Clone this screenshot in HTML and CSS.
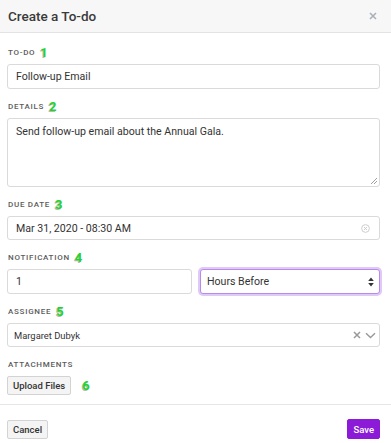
FILE: index.html
```html
<!DOCTYPE html>
<html lang="en">
<head>
    <meta charset="UTF-8">
    <meta name="viewport" content="width=device-width, initial-scale=1.0">
    <title>Create a To-do</title>
    <link rel="stylesheet" href="styles.css">
</head>
<body>
    <div class="modal">
        <div class="modal-header">
            <h1>Create a To-do</h1>
            <svg class="close" width="8" height="8" viewBox="0 0 8 8"><path d="M1 1L7 7M7 1L1 7" stroke="#aab0bb" stroke-width="1.6"/></svg>
        </div>
        <div class="modal-body">
            <div class="field">
                <label>TO-DO <span class="num">1</span></label>
                <div class="input">Follow-up Email</div>
            </div>
            <div class="field">
                <label>DETAILS <span class="num">2</span></label>
                <div class="input textarea">Send follow-up email about the Annual Gala.
                    <svg class="grip" width="7" height="7" viewBox="0 0 7 7"><path d="M1 7L7 1M4 7L7 4" stroke="#888" stroke-width="0.8"/></svg>
                </div>
            </div>
            <div class="field">
                <label>DUE DATE <span class="num">3</span></label>
                <div class="input date">Mar 31, 2020 - 08:30 AM
                    <svg class="clear" width="9" height="9" viewBox="0 0 10 10"><circle cx="5" cy="5" r="4.3" fill="none" stroke="#c4c4c4" stroke-width="0.9"/><path d="M3.3 3.3L6.7 6.7M6.7 3.3L3.3 6.7" stroke="#c4c4c4" stroke-width="0.9"/></svg>
                </div>
            </div>
            <div class="field">
                <label>NOTIFICATION <span class="num">4</span></label>
                <div class="row">
                    <div class="input">1</div>
                    <div class="input select">Hours Before
                        <svg class="arrows" width="6" height="10" viewBox="0 0 6 10"><path d="M3 0.5L5.8 4H0.2Z M3 9.5L5.8 6H0.2Z" fill="#333"/></svg>
                    </div>
                </div>
            </div>
            <div class="field">
                <label>ASSIGNEE <span class="num">5</span></label>
                <div class="input picker">Margaret Dubyk
                    <span class="picker-icons">
                        <svg width="8" height="8" viewBox="0 0 8 8"><path d="M1 1L7 7M7 1L1 7" stroke="#999" stroke-width="1.5"/></svg>
                        <svg width="11" height="7" viewBox="0 0 11 7"><path d="M1 1.2L5.5 5.6L10 1.2" fill="none" stroke="#999" stroke-width="1.4"/></svg>
                    </span>
                </div>
            </div>
            <div class="field">
                <label>ATTACHMENTS</label>
                <div class="upload">
                    <button class="btn">Upload Files</button>
                    <span class="num">6</span>
                </div>
            </div>
        </div>
        <div class="modal-footer">
            <button class="btn">Cancel</button>
            <button class="btn btn-primary">Save</button>
        </div>
    </div>
</body>
</html>
```

FILE: styles.css
```css
* {
    margin: 0;
    padding: 0;
    box-sizing: border-box;
}
body {
    font-family: Roboto, "Liberation Sans", Arial, sans-serif;
    color: #333;
    background: #fff;
}
.modal {
    width: 391px;
    height: 443px;
}
.modal-header {
    height: 33px;
    padding: 0 9px 0 8px;
    display: flex;
    align-items: center;
    justify-content: space-between;
    background: #f7f7f7;
    border-bottom: 1px solid #e3e3e3;
}
.modal-header h1 {
    font-size: 13.5px;
    font-weight: 500;
    color: #3a3a3a;
}
.close {
    margin-right: 5px;
}
.modal-body {
    padding: 13px 11px 9px 7px;
    border-bottom: 1px solid #e6e6e6;
}
.field + .field {
    margin-top: 11px;
}
label {
    display: flex;
    align-items: center;
    height: 12px;
    margin: 0 0 6px 1px;
    font-size: 8px;
    font-weight: 500;
    letter-spacing: 0.09em;
    color: #5c5c5c;
}
.num {
    margin-left: 5px;
    font-size: 13px;
    font-weight: 700;
    color: #22d32a;
    text-shadow: -1px 1px 0 #b8b8b8;
    letter-spacing: 0;
}
.input {
    position: relative;
    height: 25px;
    padding: 0 8px;
    display: flex;
    align-items: center;
    font-size: 10.6px;
    color: #333;
    border: 1px solid #dadada;
    border-radius: 3px;
    background: #fff;
}
.textarea {
    height: 69px;
    align-items: flex-start;
    padding-top: 6px;
}
.grip {
    position: absolute;
    right: 2px;
    bottom: 2px;
}
.date {
    height: 24px;
    justify-content: space-between;
}
.clear {
    margin-right: 1px;
}
.row {
    display: flex;
    gap: 8px;
}
.row .input {
    flex: 1;
}
.select {
    justify-content: space-between;
    padding: 0 5px 0 6px;
    border-color: #b98ae9;
    box-shadow: 0 0 0 2px #dfc9f7;
}
.picker {
    height: 24px;
    padding: 0 3px 0 6px;
    font-size: 9.4px;
    justify-content: space-between;
}
.picker-icons {
    display: flex;
    align-items: center;
    gap: 4px;
}
.upload {
    display: flex;
    align-items: center;
    gap: 6px;
}
.btn {
    height: 19px;
    padding: 0 5px;
    font-family: Roboto, "Liberation Sans", Arial, sans-serif;
    font-size: 9.5px;
    font-weight: 500;
    color: #333;
    background: #f4f4f4;
    border: 1px solid #d3d3d3;
    border-radius: 2px;
}
.modal-footer {
    display: flex;
    justify-content: space-between;
    align-items: center;
    padding: 14px 11px 0 7px;
}
.btn-primary {
    height: 20px;
    padding: 0 5px;
    color: #fff;
    background: #8c1bd8;
    border-color: #8c1bd8;
}
```
